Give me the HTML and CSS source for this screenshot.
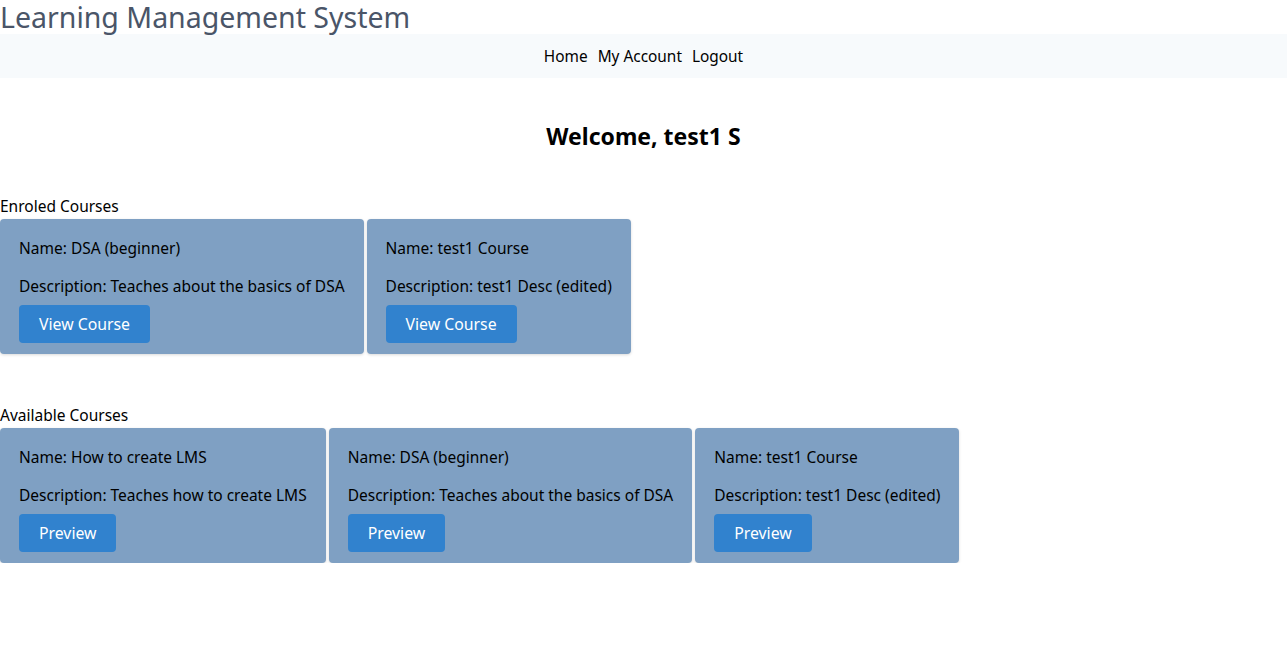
FILE: index.html
```html
<!DOCTYPE html>
<html lang="en">
<head>
<meta charset="utf-8">
<title>Learning Management System</title>
<link rel="stylesheet" href="styles.css">
</head>
<body>
<header>
  <h1 class="brand">Learning Management System</h1>
  <nav class="navbar">
    <a href="#">Home</a>
    <a href="#">My Account</a>
    <a href="#">Logout</a>
  </nav>
</header>
<main>
  <h2 class="welcome">Welcome, test1 S</h2>

  <section class="section enrolled">
    <div class="section-title">Enroled Courses</div>
    <div class="cards">
      <div class="card">
        <p class="name">Name: DSA (beginner)</p>
        <p class="desc">Description: Teaches about the basics of DSA</p>
        <button class="btn">View Course</button>
      </div>
      <div class="card">
        <p class="name">Name: test1 Course</p>
        <p class="desc">Description: test1 Desc (edited)</p>
        <button class="btn">View Course</button>
      </div>
    </div>
  </section>

  <section class="section available">
    <div class="section-title">Available Courses</div>
    <div class="cards">
      <div class="card">
        <p class="name">Name: How to create LMS</p>
        <p class="desc">Description: Teaches how to create LMS</p>
        <button class="btn">Preview</button>
      </div>
      <div class="card">
        <p class="name">Name: DSA (beginner)</p>
        <p class="desc">Description: Teaches about the basics of DSA</p>
        <button class="btn">Preview</button>
      </div>
      <div class="card">
        <p class="name">Name: test1 Course</p>
        <p class="desc">Description: test1 Desc (edited)</p>
        <button class="btn">Preview</button>
      </div>
    </div>
  </section>
</main>
</body>
</html>
```

FILE: styles.css
```css
* { box-sizing: border-box; }

html, body {
  margin: 0;
  padding: 0;
  background: #ffffff;
}

body {
  font-family: "Noto Sans", "Open Sans", sans-serif;
  font-size: 16px;
  color: #000000;
}

.brand {
  margin: 0;
  font-size: 28.5px;
  font-weight: 400;
  line-height: 34px;
  height: 34px;
  color: #4a5568;
  white-space: nowrap;
}

.navbar {
  height: 44px;
  padding-top: 2px;
  background: #f7fafc;
  display: flex;
  justify-content: center;
  align-items: center;
  gap: 10px;
}

.navbar a {
  color: #000000;
  text-decoration: none;
  font-size: 15.4px;
  line-height: 24px;
}

.welcome {
  margin: 44px 0 0;
  text-align: center;
  font-size: 23px;
  font-weight: 700;
  line-height: 28px;
}

.section-title {
  font-size: 15.5px;
  line-height: 24px;
  height: 25px;
}

.enrolled { margin-top: 44px; }
.available { margin-top: 49px; }

.cards {
  display: flex;
  gap: 3px;
  align-items: flex-start;
}

.card {
  background: #7fa0c3;
  border-radius: 4px;
  box-shadow: 0 1px 3px rgba(0, 0, 0, 0.15);
  padding: 17px 19px 11px;
  height: 135px;
}

.card p {
  margin: 0;
  font-size: 15.5px;
  line-height: 24px;
  white-space: nowrap;
}

.card .name { margin-bottom: 14px; }
.card .desc { margin-bottom: 7px; }

.btn {
  display: block;
  height: 38px;
  padding: 0 20px;
  border: none;
  border-radius: 4px;
  background: #3182ce;
  color: #ffffff;
  font-family: inherit;
  font-size: 15.8px;
  cursor: pointer;
}
```
